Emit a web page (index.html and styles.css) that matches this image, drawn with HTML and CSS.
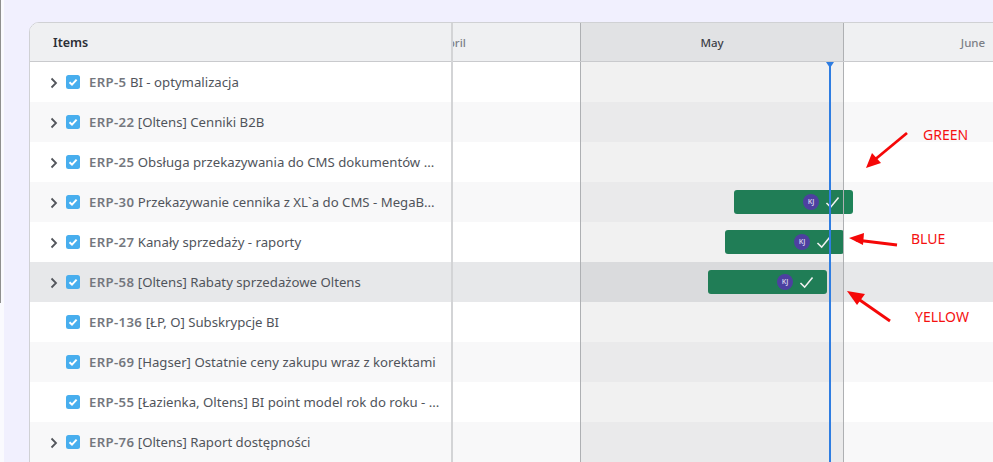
FILE: index.html
```html
<!DOCTYPE html>
<html lang="pl">
<head>
<meta charset="utf-8">
<title>Items</title>
<link rel="stylesheet" href="styles.css">
</head>
<body>
<div class="edge"></div>
<main class="panel">
  <header class="head">
    <div class="head-title">Items</div>
    <div class="head-months">
      <div class="month month-apr">April</div>
      <div class="month month-may">May</div>
      <div class="month month-jun">June</div>
    </div>
  </header>
  <section class="rows">
    <div class="row">
      <div class="cell"><svg class="chev" viewBox="0 0 8 12"><path d="M1.5 1.5 6 6l-4.500 4.500"/></svg><span class="box"><svg viewBox="0 0 14 14"><path d="M3.500 7.200 6 9.600l4.600-5"/></svg></span><span class="txt"><b>ERP-5</b> BI - optymalizacja</span></div>
      <div class="track"></div>
    </div>
    <div class="row">
      <div class="cell"><svg class="chev" viewBox="0 0 8 12"><path d="M1.5 1.5 6 6l-4.500 4.500"/></svg><span class="box"><svg viewBox="0 0 14 14"><path d="M3.500 7.200 6 9.600l4.600-5"/></svg></span><span class="txt"><b>ERP-22</b> [Oltens] Cenniki B2B</span></div>
      <div class="track"></div>
    </div>
    <div class="row">
      <div class="cell"><svg class="chev" viewBox="0 0 8 12"><path d="M1.5 1.5 6 6l-4.500 4.500"/></svg><span class="box"><svg viewBox="0 0 14 14"><path d="M3.500 7.200 6 9.600l4.600-5"/></svg></span><span class="txt"><b>ERP-25</b> Obsługa przekazywania do CMS dokumentów ...</span></div>
      <div class="track"></div>
    </div>
    <div class="row">
      <div class="cell"><svg class="chev" viewBox="0 0 8 12"><path d="M1.5 1.5 6 6l-4.500 4.500"/></svg><span class="box"><svg viewBox="0 0 14 14"><path d="M3.500 7.200 6 9.600l4.600-5"/></svg></span><span class="txt"><b>ERP-30</b> Przekazywanie cennika z XL`a do CMS - MegaB...</span></div>
      <div class="track"><div class="bar bar-a"><span class="avatar">KJ</span><svg class="tick" viewBox="0 0 16 14"><path d="M1.500 7.500 6 12 14.500 1.500"/></svg></div></div>
    </div>
    <div class="row">
      <div class="cell"><svg class="chev" viewBox="0 0 8 12"><path d="M1.5 1.5 6 6l-4.500 4.500"/></svg><span class="box"><svg viewBox="0 0 14 14"><path d="M3.500 7.200 6 9.600l4.600-5"/></svg></span><span class="txt"><b>ERP-27</b> Kanały sprzedaży - raporty</span></div>
      <div class="track"><div class="bar bar-b"><span class="avatar">KJ</span><svg class="tick" viewBox="0 0 16 14"><path d="M1.500 7.500 6 12 14.500 1.500"/></svg></div></div>
    </div>
    <div class="row row-hover">
      <div class="cell"><svg class="chev" viewBox="0 0 8 12"><path d="M1.5 1.5 6 6l-4.500 4.500"/></svg><span class="box"><svg viewBox="0 0 14 14"><path d="M3.500 7.200 6 9.600l4.600-5"/></svg></span><span class="txt"><b>ERP-58</b> [Oltens] Rabaty sprzedażowe Oltens</span></div>
      <div class="track"><div class="bar bar-c"><span class="avatar">KJ</span><svg class="tick" viewBox="0 0 16 14"><path d="M1.500 7.500 6 12 14.500 1.500"/></svg></div></div>
    </div>
    <div class="row">
      <div class="cell leaf"><span class="box"><svg viewBox="0 0 14 14"><path d="M3.500 7.200 6 9.600l4.600-5"/></svg></span><span class="txt"><b>ERP-136</b> [ŁP, O] Subskrypcje BI</span></div>
      <div class="track"></div>
    </div>
    <div class="row">
      <div class="cell leaf"><span class="box"><svg viewBox="0 0 14 14"><path d="M3.500 7.200 6 9.600l4.600-5"/></svg></span><span class="txt"><b>ERP-69</b> [Hagser] Ostatnie ceny zakupu wraz z korektami</span></div>
      <div class="track"></div>
    </div>
    <div class="row">
      <div class="cell leaf"><span class="box"><svg viewBox="0 0 14 14"><path d="M3.500 7.200 6 9.600l4.600-5"/></svg></span><span class="txt"><b>ERP-55</b> [Łazienka, Oltens] BI point model rok do roku - ...</span></div>
      <div class="track"></div>
    </div>
    <div class="row">
      <div class="cell"><svg class="chev" viewBox="0 0 8 12"><path d="M1.5 1.5 6 6l-4.500 4.500"/></svg><span class="box"><svg viewBox="0 0 14 14"><path d="M3.500 7.200 6 9.600l4.600-5"/></svg></span><span class="txt"><b>ERP-76</b> [Oltens] Raport dostępności</span></div>
      <div class="track"></div>
    </div>
  </section>
  <div class="may-band"></div>
  <div class="today"></div>
  <div class="splitter"></div>
</main>
<svg class="notes" viewBox="0 0 993 462">
  <g class="arrow">
    <path d="M907 133 872 162"/><path class="head-fill" d="M866 168 881 163 872 153Z"/>
    <path d="M897 245 856 240"/><path class="head-fill" d="M849 238 863 245 864 233Z"/>
    <path d="M890 321 854 296"/><path class="head-fill" d="M847 291 857 305 865 294Z"/>
  </g>
</svg>
<div class="note note-g">GREEN</div>
<div class="note note-b">BLUE</div>
<div class="note note-y">YELLOW</div>
</body>
</html>
```
FILE: styles.css
```css
* { box-sizing: border-box; }
html, body { margin: 0; height: 100%; overflow: hidden; }
body { position: relative; background: #f1f0fe; font-family: "Noto Sans", "Open Sans", sans-serif; padding: 22px 0 0 29px; }
.edge { position: absolute; left: 0; top: 0; width: 4px; height: 100%; background: #fafafe; }
.edge::before { content: ""; position: absolute; left: 0; top: 0; width: 1px; height: 303px; background: #8f8f8f; }
.panel { position: relative; width: 990px; height: 460px; background: #fff; border: 1px solid #d0d1d4; border-radius: 10px 0 0 0; overflow: hidden; }
.head { display: flex; height: 39px; background: #eff0f2; border-bottom: 1px solid #c9cacd; }
.head-title { width: 421px; flex: none; padding: 0 0 0 23px; font-size: 12.500px; font-weight: 600; line-height: 40px; color: #2b2f36; background: #eff0f2; position: relative; z-index: 2; }
.head-months { flex: none; display: flex; margin-left: -129px; }
.month { width: 258px; flex: none; text-align: center; font-size: 11.500px; font-weight: 500; line-height: 40px; color: #7c7f86; }
.month-apr { padding-left: 4px; }
.month-may { width: 264px; background: #e1e2e4; color: #3d4047; border-left: 1px solid #aeb0b3; border-right: 1px solid #aeb0b3; }
.rows { display: block; }
.row { display: flex; height: 40px; background: #fff; }
.row:nth-child(even) { background: #f8f8f9; }
.row.row-hover { background: #e7e8ea; }
.cell { width: 421px; flex: none; display: flex; align-items: center; padding-left: 20px; position: relative; z-index: 2; background: inherit; }
.cell.leaf { padding-left: 36px; }
.chev { width: 8px; height: 12px; margin: 2px 8px 0 0; fill: none; stroke: #53565c; stroke-width: 1.800; }
.box { width: 14px; height: 14px; flex: none; border-radius: 2.500px; background: #48aeee; margin-right: 9px; display: flex; }
.box svg { width: 14px; height: 14px; fill: none; stroke: #fff; stroke-width: 2; }
.txt { white-space: nowrap; font-size: 13.200px; line-height: 20px; color: #50545b; }
.txt b { font-weight: 600; letter-spacing: .35px; color: #74777e; }
.track { flex: 1; position: relative; }
.bar { position: absolute; top: 8px; height: 24px; width: 119px; border-radius: 3px; background: #1f8359; z-index: 1; display: flex; align-items: center; justify-content: flex-end; padding-right: 13px; }
.bar-a { left: 283px; }
.bar-b { left: 274px; }
.bar-c { left: 257px; }
.avatar { width: 16px; height: 16px; border-radius: 50%; background: #4f41a8; color: #dcd9f5; font-size: 7px; font-weight: 600; line-height: 16px; text-align: center; margin-right: 6px; }
.tick { width: 15px; height: 13px; fill: none; stroke: #fff; stroke-width: 1.700; }
.may-band { position: absolute; left: 550px; top: 39px; bottom: 0; width: 264px; background: rgba(50, 50, 55, .07); border-left: 1px solid #aeb0b3; border-right: 1px solid #aeb0b3; pointer-events: none; z-index: 1; }
.today { position: absolute; left: 799px; top: 39px; bottom: 0; width: 2px; background: #2f7de1; z-index: 3; }
.today::before { content: ""; position: absolute; left: -3px; top: 0; border-left: 4px solid transparent; border-right: 4px solid transparent; border-top: 6px solid #2f7de1; }
.splitter { position: absolute; left: 421px; top: 0; bottom: 0; width: 2px; background: #d3d4d6; z-index: 3; }
.notes { position: absolute; left: 0; top: 0; width: 993px; height: 462px; pointer-events: none; z-index: 5; }
.arrow path { fill: none; stroke: #f50808; stroke-width: 2.800; }
.arrow path.head-fill { fill: #f50808; stroke: none; }
.note { position: absolute; z-index: 6; font-family: "Noto Sans", sans-serif; font-size: 14px; line-height: 16px; color: #f51010; }
.note-g { left: 923px; top: 127px; }
.note-b { left: 911px; top: 231px; }
.note-y { left: 915px; top: 309px; }
```
